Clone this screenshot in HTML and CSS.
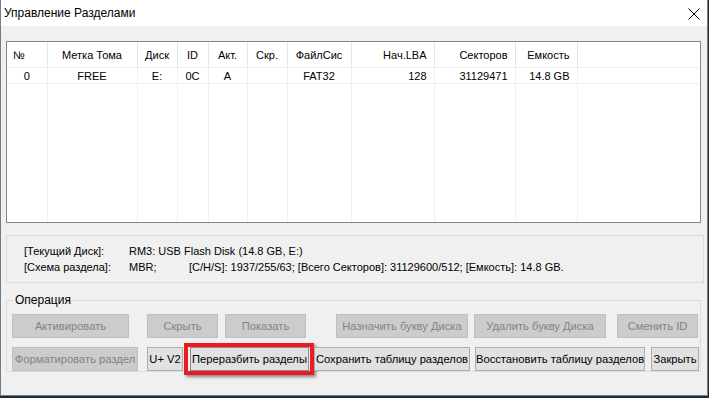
FILE: index.html
```html
<!DOCTYPE html>
<html lang="ru">
<head>
    <meta charset="UTF-8">
    <meta name="viewport" content="width=device-width, initial-scale=1.0">
    <title>Управление Разделами</title>
    <link rel="stylesheet" href="styles.css">
</head>
<body>
    <div class="window">
        <div class="titlebar">
            <span class="title">Управление Разделами</span>
            <svg class="close" width="12" height="12" viewBox="0 0 12 12">
                <path d="M0.5 0.5 L11.5 11.5 M11.5 0.5 L0.5 11.5" stroke="#000" stroke-width="1" fill="none"/>
            </svg>
        </div>

        <div class="content">
            <div class="list">
                <table class="list-table">
                    <colgroup>
                        <col style="width:40px"><col style="width:90px"><col style="width:40px">
                        <col style="width:31px"><col style="width:39px"><col style="width:40px">
                        <col style="width:64px"><col style="width:83px"><col style="width:81px">
                        <col style="width:62px"><col>
                    </colgroup>
                    <thead>
                        <tr>
                            <th class="left">№</th>
                            <th>Метка Тома</th>
                            <th>Диск</th>
                            <th>ID</th>
                            <th>Акт.</th>
                            <th>Скр.</th>
                            <th>ФайлСис</th>
                            <th class="right">Нач.LBA</th>
                            <th class="right">Секторов</th>
                            <th class="right">Емкость</th>
                            <th class="last"></th>
                        </tr>
                    </thead>
                    <tbody>
                        <tr class="row">
                            <td>0</td>
                            <td>FREE</td>
                            <td>E:</td>
                            <td>0C</td>
                            <td>A</td>
                            <td></td>
                            <td>FAT32</td>
                            <td class="right">128</td>
                            <td class="right">31129471</td>
                            <td class="right">14.8 GB</td>
                            <td class="last"></td>
                        </tr>
                        <tr class="filler">
                            <td></td><td></td><td></td><td></td><td></td><td></td>
                            <td></td><td></td><td></td><td></td><td class="last"></td>
                        </tr>
                    </tbody>
                </table>
            </div>

            <div class="info">
                <div class="info-line">
                    <span class="info-label">[Текущий Диск]:</span>
                    <span>RM3: USB Flash Disk (14.8 GB, E:)</span>
                </div>
                <div class="info-line">
                    <span class="info-label">[Схема раздела]:</span>
                    <span><span class="scheme">MBR;</span>[C/H/S]: 1937/255/63; [Всего Секторов]: 31129600/512; [Емкость]: 14.8 GB.</span>
                </div>
            </div>

            <fieldset class="operations">
                <legend>Операция</legend>
                <div class="btn-row">
                    <button class="btn b-activate" disabled>Активировать</button>
                    <button class="btn b-hide" disabled>Скрыть</button>
                    <button class="btn b-show" disabled>Показать</button>
                    <button class="btn b-assign" disabled>Назначить букву Диска</button>
                    <button class="btn b-remove" disabled>Удалить букву Диска</button>
                    <button class="btn b-changeid" disabled>Сменить ID</button>
                </div>
                <div class="btn-row">
                    <button class="btn b-format" disabled>Форматировать раздел</button>
                    <button class="btn b-uv2">U+ V2</button>
                    <span class="highlight">
                        <button class="btn b-repart">Переразбить разделы</button>
                    </span>
                    <button class="btn b-save">Сохранить таблицу разделов</button>
                    <button class="btn b-restore">Восстановить таблицу разделов</button>
                    <button class="btn b-close">Закрыть</button>
                </div>
            </fieldset>
        </div>
    </div>
</body>
</html>
```

FILE: styles.css
```css
/* page */
body {
    margin: 0;
    background: #1f2c33;
    font-family: "Liberation Sans", Arial, sans-serif;
    font-size: 11px;
    color: #000;
}

.window {
    width: 706px;
    height: 395px;
    background: #f0f0f0;
    border: 1px solid #6f7d88;
    border-top: none;
    overflow: hidden;
}

/* title bar */
.titlebar {
    height: 26px;
    background: #fff;
    display: flex;
    align-items: center;
    justify-content: space-between;
    padding: 0 7px 0 3px;
}

.title {
    font-size: 12px;
    font-family: "Liberation Sans", Arial, sans-serif;
}

.close {
    display: block;
    margin-top: 1px;
}

.content {
    padding: 15px 5px 0 5px;
}

/* partition list */
.list {
    height: 180px;
    background: #fff;
    border: 1px solid #828790;
    width: 693px;
    overflow: hidden;
}

.list-table {
    border-collapse: collapse;
    table-layout: fixed;
    width: 693px;
}

.list-table th {
    height: 25px;
    font-weight: normal;
    text-align: center;
    padding: 0 2px;
    border-right: 1px solid #e5e5e5;
    border-bottom: 1px solid #f0f0f0;
    white-space: nowrap;
}

.list-table td {
    height: 15px;
    padding: 0 2px;
    text-align: center;
    border-right: 1px solid #f0f0f0;
    border-bottom: 1px solid #f0f0f0;
    white-space: nowrap;
}

.list-table .left {
    text-align: left;
    padding-left: 6px;
}

.list-table .right {
    text-align: right;
    padding-right: 7px;
}

.list-table .last {
    border-right: none;
}

.list-table .filler td {
    height: 138px;
    border-bottom: none;
}

/* disk info */
.info {
    margin-top: 12px;
    width: 679px;
    height: 46px;
    border: 1px solid #dcdcdc;
    padding: 0 0 0 17px;
    box-sizing: content-box;
}

.info-line {
    display: flex;
    line-height: 16px;
}

.info-line:first-child {
    margin-top: 7px;
}

.info-label {
    width: 105px;
    flex-shrink: 0;
}

.scheme {
    display: inline-block;
    width: 60px;
}

/* operations */
.operations {
    margin: 10px 0 0 0;
    padding: 7px 0 0 0;
    width: 695px;
    height: 79px;
    border: 1px solid #dcdcdc;
    box-sizing: border-box;
}

.operations legend {
    margin-left: 7px;
    padding: 0 1px;
    font-size: 12px;
}

.btn-row {
    display: flex;
    align-items: center;
    height: 24px;
    margin-bottom: 9px;
}

.btn {
    height: 24px;
    padding: 0;
    font-family: "Liberation Sans", Arial, sans-serif;
    font-size: 11.2px;
    background: #e1e1e1;
    border: 1px solid #adadad;
    color: #000;
    white-space: nowrap;
    overflow: hidden;
}

.btn:disabled {
    background: #cccccc;
    border-color: #bfbfbf;
    color: #838383;
}

.highlight {
    display: flex;
    margin: -4px 0;
    padding: 0 1px 0 2px;
    border: 4px solid #ea1b21;
    box-shadow: 2px 2px 3px rgba(0, 0, 0, 0.45);
}

.b-activate { width: 117px; margin-left: 5px; }
.b-hide     { width: 71px;  margin-left: 18px; }
.b-show     { width: 81px;  margin-left: 7px; }
.b-assign   { width: 132px; margin-left: 30px; }
.b-remove   { width: 132px; margin-left: 6px; }
.b-changeid { width: 81px;  margin-left: 11px; }

.b-format   { width: 126px; margin-left: 5px; }
.b-uv2      { width: 36px;  margin-left: 9px; margin-right: 1px; }
.b-repart   { width: 119px; border-color: #8c8c8c; }
.b-save     { width: 156px; margin-left: 0; }
.b-restore  { width: 170px; margin-left: 5px; }
.b-close    { width: 48px;  margin-left: 6px; }
```
